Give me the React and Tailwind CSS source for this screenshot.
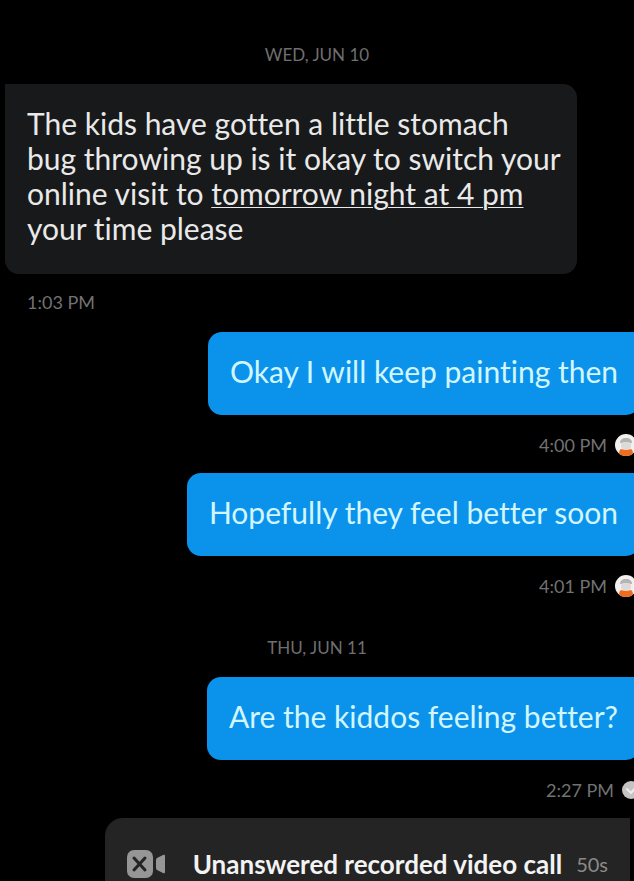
import React from 'react';

const ReadAvatar = () => (
  <svg viewBox="0 0 22 22" className="w-[22px] h-[22px] shrink-0" role="img" aria-label="Read">
    <clipPath id="avatar-clip">
      <circle cx="11" cy="11" r="11" />
    </clipPath>
    <g clipPath="url(#avatar-clip)">
      <rect width="22" height="22" fill="#f3f1f0" />
      <path d="M5 9c0-3 2-5 6-5s6 2 6 5z" fill="#b4b4b4" />
      <rect x="6" y="8" width="10" height="7" rx="3" fill="#dddbd9" />
      <path d="M4 22c0-4 0-6 2-7 2 1 8 1 10 0 2 1 2 3 2 7z" fill="#ee6c1f" />
    </g>
  </svg>
);

const SentCheck = () => (
  <svg viewBox="0 0 18 18" className="w-[18px] h-[18px] shrink-0" role="img" aria-label="Sent">
    <circle cx="9" cy="9" r="9" fill="#c4c4c4" />
    <path d="M5 8l4 4 5-6" fill="none" stroke="#ececec" strokeWidth="2" strokeLinecap="round" strokeLinejoin="round" />
  </svg>
);

const MissedVideoIcon = () => (
  <svg viewBox="0 0 38 28" className="w-[38px] h-7 shrink-0" aria-hidden="true">
    <rect width="26" height="28" rx="7" fill="#969696" />
    <path d="M7 8l11 12M18 8L7 20" stroke="#242424" strokeWidth="3" strokeLinecap="round" />
    <path d="M29 10q0-1 1-2l6-3q2-1 2 1v16q0 2-2 1l-6-3q-1-1-1-2z" fill="#969696" />
  </svg>
);

const DateLabel = ({ children }) => (
  <h2 className="text-center text-[17px] leading-6 text-[#6f6f6f]">{children}</h2>
);

const SentMessage = ({ text, time, read }) => (
  <li className="flex flex-col items-end">
    <p className="rounded-[14px] rounded-tr-none bg-[#0b93ec] px-[22px] pt-[22px] pb-[26px] text-[30px] leading-[35px] text-[#d2f6ff]">
      {text}
    </p>
    <div
      className={`mt-[18px] flex h-6 items-center gap-2 text-lg leading-6 text-[#727272] ${
        read ? 'pr-[3px]' : ''
      }`}
    >
      <time>{time}</time>
      {read ? <ReadAvatar /> : <SentCheck />}
    </div>
  </li>
);

export default function App() {
  return (
    <main className="h-screen overflow-hidden bg-black font-['Lato',sans-serif] [font-variant-ligatures:none]">
      <div className="pt-[43px]">
        <DateLabel>WED, JUN 10</DateLabel>
      </div>

      <ul className="-mr-1.5 mt-[17px] flex flex-col gap-4 pl-[5px]">
        <li className="pb-0.5">
          <p className="w-fit max-w-[572px] rounded-[14px] rounded-tl-none bg-[#18191b] pl-[22px] pr-4 pt-[22px] pb-7 text-[30px] leading-[35px] text-[#e9e9e9]">
            The kids have gotten a little stomach bug throwing up is it okay to switch your online visit to{' '}
            <a href="#event" className="underline decoration-1 underline-offset-2">tomorrow night at 4 pm</a>{' '}
            your time please
          </p>
          <time className="mt-4 block pl-[22px] text-lg leading-6 text-[#727272]">1:03 PM</time>
        </li>
        <SentMessage text="Okay I will keep painting then" time="4:00 PM" read />
        <SentMessage text="Hopefully they feel better soon" time="4:01 PM" read />
      </ul>

      <div className="mt-[38px]">
        <DateLabel>THU, JUN 11</DateLabel>
      </div>

      <ul className="-mr-1.5 mt-[17px] flex flex-col gap-4">
        <SentMessage text="Are the kiddos feeling better?" time="2:27 PM" />
        <li className="mr-2.5 flex items-center self-end rounded-[18px] rounded-tr-none bg-[#242424] px-[22px] py-[30px]">
          <MissedVideoIcon />
          <strong className="ml-7 text-[26px] leading-8 font-bold text-[#f3f3f3]">Unanswered recorded video call</strong>
          <span className="ml-[14px] text-xl leading-8 text-[#8a8a8a]">50s</span>
        </li>
      </ul>
    </main>
  );
}
